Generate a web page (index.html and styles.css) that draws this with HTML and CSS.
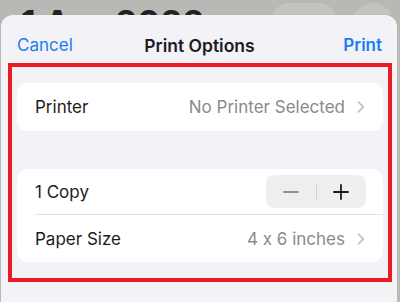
FILE: index.html
```html
<!DOCTYPE html>
<html lang="en">
<head>
<meta charset="utf-8">
<title>Print Options</title>
<link rel="stylesheet" href="styles.css">
</head>
<body>
<div class="backdrop">
  <div class="big-title">1 Apr 2022</div>
  <div class="back-actions">
    <div class="back-pill">Cancel</div>
    <div class="back-circle"></div>
  </div>
</div>

<div class="sheet">
  <div class="nav">
    <span class="nav-btn">Cancel</span>
    <span class="nav-title">Print Options</span>
    <span class="nav-btn nav-right">Print</span>
  </div>

  <div class="content">
    <div class="card">
      <div class="row">
        <span class="label">Printer</span>
        <span class="value">No Printer Selected</span>
        <svg class="chevron" width="8" height="12" viewBox="0 0 8 12"><path d="M1.5 1.2 L6.3 6 L1.5 10.8" fill="none" stroke="#c4c4c7" stroke-width="1.8" stroke-linecap="round" stroke-linejoin="round"/></svg>
      </div>
    </div>

    <div class="card">
      <div class="row row-copy">
        <span class="label">1 Copy</span>
        <div class="stepper">
          <span class="step step-minus"><svg width="16" height="16" viewBox="0 0 16 16"><path d="M1 8 H15" stroke="#8e8e93" stroke-width="1.8" stroke-linecap="round"/></svg></span>
          <span class="step-sep"></span>
          <span class="step"><svg width="16" height="16" viewBox="0 0 16 16"><path d="M1 8 H15 M8 1 V15" stroke="#1c1c1e" stroke-width="1.8" stroke-linecap="round"/></svg></span>
        </div>
      </div>
      <div class="row">
        <span class="label">Paper Size</span>
        <span class="value">4 x 6 inches</span>
        <svg class="chevron" width="8" height="12" viewBox="0 0 8 12"><path d="M1.5 1.2 L6.3 6 L1.5 10.8" fill="none" stroke="#c4c4c7" stroke-width="1.8" stroke-linecap="round" stroke-linejoin="round"/></svg>
      </div>
    </div>
  </div>
</div>
</body>
</html>
```

FILE: styles.css
```css
/* reset */
*{
margin:0;
padding:0;
box-sizing:border-box;
}
body{
width:400px;
height:302px;
overflow:hidden;
background:#b8b9b4;
font-family:Inter,"Noto Sans",sans-serif;
font-feature-settings:"calt" 0;
color:#1c1c1e;
}

/* page behind the sheet, only its top shows */
.backdrop{
height:15px;
overflow:hidden;
display:flex;
justify-content:space-between;
}
.big-title{
font-size:34px;
font-weight:700;
line-height:34px;
margin:6px 0 0 21px;
color:#222;
letter-spacing:0.5px;
}
.back-actions{
display:flex;
gap:16px;
margin:3px 6px 0 0;
}
.back-pill{
width:64px;
height:34px;
border-radius:17px;
background:#c2c3be;
color:#2f6fd0;
font-size:17px;
line-height:34px;
text-align:center;
padding-top:5px;
}
.back-circle{
width:42px;
height:42px;
border-radius:50%;
background:#c2c3be;
}

/* the sheet */
.sheet{
margin:0 3px 0 1px;
height:287px;
background:#f2f2f7;
border-radius:12px 12px 0 0;
}
.nav{
height:48px;
display:grid;
grid-template-columns:1fr auto 1fr;
align-items:center;
padding:12px 15px 0 16px;
font-size:17px;
}
.nav-btn{
color:#1a7cf5;
}
.nav-right{
text-align:right;
font-weight:600;
}
.nav-title{
font-weight:600;
font-size:17.5px;
}

/* red outline round the options */
.content{
margin:0 5px 0 7px;
border:4px solid #ec1c24;
padding:16px 5px;
display:flex;
flex-direction:column;
gap:38px;
}
.card{
background:#fff;
border-radius:10px;
}
.row{
height:48px;
margin-left:18px;
padding-right:18px;
display:flex;
align-items:center;
font-size:17px;
}
.row-copy{
height:46px;
padding-right:17px;
border-bottom:1px solid #e2e2e6;
}
.row-copy + .row{
height:47px;
}
.label{
flex:1;
}
.value{
color:#8a8a8e;
margin-right:12px;
}
.chevron{
display:block;
}

/* stepper */
.stepper{
width:100px;
height:33px;
border-radius:8px;
background:#eeeef0;
display:flex;
align-items:center;
}
.step{
flex:1;
display:flex;
justify-content:center;
}
.step svg{
display:block;
}
.step-sep{
width:1px;
height:17px;
background:#d4d4d8;
}
```
